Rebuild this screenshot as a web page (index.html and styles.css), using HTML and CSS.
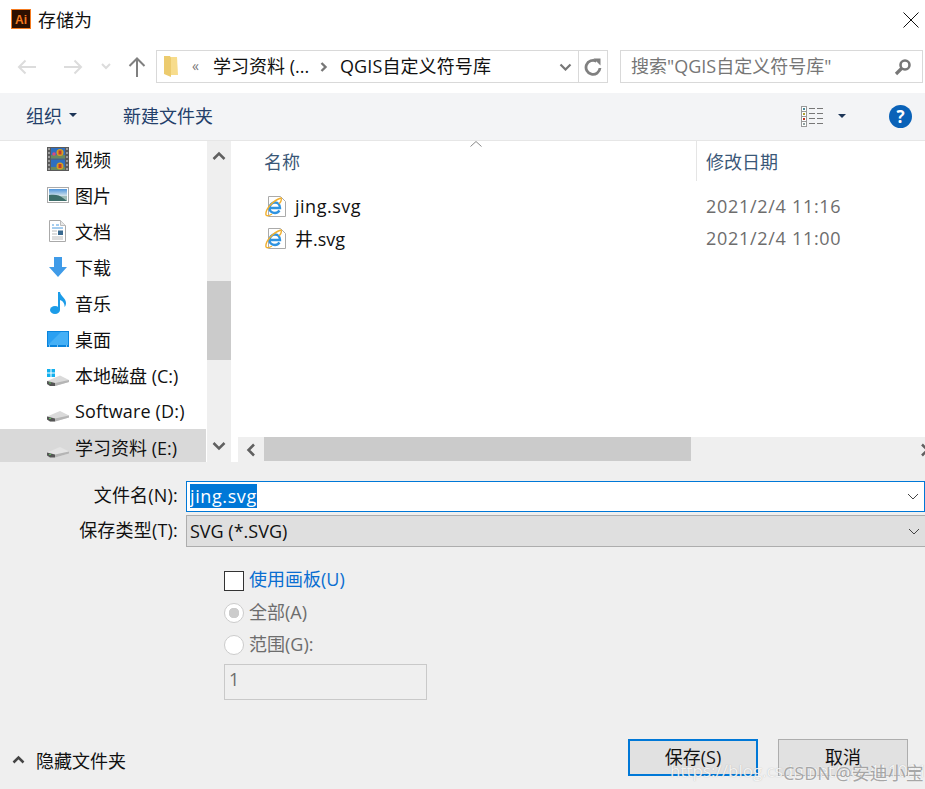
FILE: index.html
```html
<!DOCTYPE html>
<html lang="zh">
<head>
<meta charset="utf-8">
<title>存储为</title>
<link rel="stylesheet" href="styles.css">
</head>
<body>
<div class="dialog">
  <header class="titlebar">
    <svg class="app-icon" width="20" height="20" viewBox="0 0 20 20"><rect x="0.500" y="0.500" width="19" height="19" fill="#2d0f00" stroke="#f47b20"/><text x="10" y="14.500" text-anchor="middle" class="ai-text">Ai</text></svg>
    <span class="title">存储为</span>
    <svg class="close" width="16" height="16" viewBox="0 0 16 16"><path d="M0.500 0.500L15.500 15.500M15.500 0.500L0.500 15.500" stroke="#111" stroke-width="1" fill="none"/></svg>
  </header>

  <nav class="navbar">
    <div class="nav-buttons">
      <svg width="20" height="16" viewBox="0 0 20 16"><path d="M19 8H2M8.500 1.500L2 8l6.500 6.500" fill="none" stroke="#dcdcdc" stroke-width="2"/></svg>
      <svg class="nav-forward" width="20" height="16" viewBox="0 0 20 16"><path d="M1 8h17M11.500 1.500L18 8l-6.500 6.500" fill="none" stroke="#dcdcdc" stroke-width="2"/></svg>
      <svg class="nav-down" width="10" height="7" viewBox="0 0 10 7"><path d="M1 1l4 4 4-4" fill="none" stroke="#dcdcdc" stroke-width="2"/></svg>
      <svg class="nav-up" width="18" height="20" viewBox="0 0 18 20"><path d="M9 20V2M1.500 9L9 1.500 16.500 9" fill="none" stroke="#808080" stroke-width="2"/></svg>
    </div>
    <div class="address">
      <svg class="addr-folder" width="14" height="21" viewBox="0 0 14 21"><path d="M4 1h9l1 18H4z" fill="#f7dc8c"/><path d="M0 0h6l1 2v19l-7-3z" fill="#eccb6e"/></svg>
      <span class="addr-chev">«</span>
      <span class="addr-part">学习资料 (...</span>
      <svg class="addr-sep" width="8" height="10" viewBox="0 0 8 10"><path d="M1.500 1l4 4-4 4" fill="none" stroke="#777" stroke-width="2.400"/></svg>
      <span class="addr-current">QGIS自定义符号库</span>
      <svg class="addr-drop" width="13" height="8" viewBox="0 0 13 8"><path d="M1.500 1.500l5 5 5-5" fill="none" stroke="#777" stroke-width="2.200"/></svg>
      <span class="addr-refresh">
        <svg width="18" height="18" viewBox="0 0 18 18"><path d="M12.500 3.300A7 7 0 1 0 16 10" fill="none" stroke="#808080" stroke-width="2.800"/><path d="M9.500 0.500h7v7z" fill="#808080"/></svg>
      </span>
    </div>
    <div class="search">
      <span class="search-text">搜索"QGIS自定义符号库"</span>
      <svg width="18" height="18" viewBox="0 0 18 18"><circle cx="11" cy="7" r="4.500" fill="none" stroke="#777" stroke-width="2.600"/><path d="M7.500 10.500L2 16" stroke="#777" stroke-width="3.200"/></svg>
    </div>
  </nav>

  <div class="toolbar">
    <span class="tool">组织<i class="caret"></i></span>
    <span class="tool tool-new">新建文件夹</span>
    <span class="tool-right">
      <svg class="view-icon" width="22" height="21" viewBox="0 0 22 21">
        <rect x="0.500" y="0.500" width="5" height="20" fill="#fff" stroke="#999"/>
        <path d="M0.500 5.500h5M0.500 10.500h5M0.500 15.500h5" stroke="#999"/>
        <rect x="2" y="2" width="2" height="2" fill="#4a8a9a"/><rect x="2" y="7" width="2" height="2" fill="#b0a030"/><rect x="2" y="12" width="2" height="2" fill="#c03020"/><rect x="2" y="17" width="2" height="2" fill="#90a0a0"/>
        <path d="M8 2.500h6M16 2.500h6M8 7.500h6M16 7.500h6M8 12.500h6M16 12.500h6M8 17.500h6M16 17.500h6" stroke="#777"/>
      </svg>
      <i class="caret caret-view"></i>
      <span class="help">?</span>
    </span>
  </div>

  <div class="browser">
    <aside class="tree">
      <div class="tree-row">
        <svg width="22" height="24" viewBox="0 0 22 24"><rect width="22" height="24" fill="#5a5a5a"/><rect x="4" y="1" width="14" height="10.500" fill="#2f6fc0"/><rect x="4" y="12.500" width="14" height="10.500" fill="#2f6fc0"/><rect x="4" y="8" width="14" height="3.500" fill="#6a8a60"/><rect x="4" y="20" width="14" height="3" fill="#6a8a60"/><circle cx="13" cy="5.500" r="3.500" fill="#d9a020"/><path d="M11.500 3.500h3v4h-3z" fill="#c03a30"/><circle cx="7" cy="7" r="1.800" fill="#d84a80"/><circle cx="13" cy="19" r="3.500" fill="#d9a020"/><path d="M11.500 17h3v4h-3z" fill="#c03a30"/><path d="M1 2h2M1 6h2M1 10h2M1 14h2M1 18h2M1 22h2M19 2h2M19 6h2M19 10h2M19 14h2M19 18h2M19 22h2" stroke="#ddd"/></svg>
        <span>视频</span></div>
      <div class="tree-row">
        <svg width="22" height="16" viewBox="0 0 22 16"><defs><linearGradient id="sky" x1="0" y1="0" x2="0" y2="1"><stop offset="0" stop-color="#4f95dc"/><stop offset="1" stop-color="#d5e4ea"/></linearGradient></defs><rect x="0.500" y="0.500" width="21" height="15" fill="#fff" stroke="#aaa"/><rect x="2" y="2" width="18" height="7" fill="url(#sky)"/><rect x="2" y="9" width="18" height="5" fill="#9fbcb8"/><path d="M2 14V8c6-1 11 0 14 3l4 3z" fill="#3d6e6a"/></svg>
        <span>图片</span></div>
      <div class="tree-row">
        <svg class="icon-doc" width="17" height="22" viewBox="0 0 17 22"><path d="M0.500 0.500h11l5 5v16H0.500z" fill="#fff" stroke="#aaa"/><path d="M11.500 0.500v5h5" fill="#e8e8e8" stroke="#bbb"/><path d="M3 5h2M7 5h3M3 8h11" stroke="#4a9ade"/><path d="M3 11h5M3 14h5M3 17h11M3 19h11" stroke="#bbb"/><rect x="9" y="10.500" width="5" height="4.500" fill="#3a6a90"/></svg>
        <span>文档</span></div>
      <div class="tree-row">
        <svg class="icon-down" width="18" height="20" viewBox="0 0 18 20"><path d="M5 0h8v10h5L9 20 0 10h5z" fill="#3f9be8"/></svg>
        <span>下载</span></div>
      <div class="tree-row">
        <svg class="icon-music" width="16" height="22" viewBox="0 0 16 22"><ellipse cx="5" cy="18" rx="5" ry="4" fill="#1c9ce8"/><path d="M8 0h2c.5 4 6 6 6 11 0 1.500-.5 3-1.500 4 .5-3-1.500-6-4.500-7v10H8z" fill="#1c9ce8"/></svg>
        <span>音乐</span></div>
      <div class="tree-row">
        <svg width="22" height="16" viewBox="0 0 22 16"><rect width="22" height="16" fill="#0a84dc"/><rect x="1" y="1" width="20" height="13" fill="#2aa0f2"/><path d="M1 14L14 1h7v13z" fill="#45b0f6"/><path d="M2 15h1M10 15h1M19 15h1" stroke="#fff"/></svg>
        <span>桌面</span></div>
      <div class="tree-row">
        <svg class="icon-drive-win" width="22" height="18" viewBox="0 0 22 18"><path d="M0 0h3.500v3.500H0zM4.500 0H8v3.500H4.500zM0 4.500h3.500V8H0zM4.500 4.500H8V8H4.500z" fill="#12b0ee"/><path d="M0 12L13 6.500l9 4.500v2L8 17H3l-3-2z" fill="#dadada"/><path d="M0 12v3l3 2h5v-3z" fill="#555"/><path d="M2 14h2" stroke="#5fbf60"/><path d="M8 14l14-3v2L8 17z" fill="#b5b5b5"/></svg>
        <span>本地磁盘 (C:)</span></div>
      <div class="tree-row">
        <svg class="icon-drive" width="22" height="12" viewBox="0 0 22 12"><path d="M0 6.500L13 1l9 4.500v2L8 11.500H3L0 9.500z" fill="#dadada"/><path d="M0 6.500v3l3 2h5v-3z" fill="#555"/><path d="M2 8.500h2" stroke="#5fbf60"/><path d="M8 8.500l14-3v2L8 11.500z" fill="#b5b5b5"/></svg>
        <span class="latin-name">Software (D:)</span></div>
      <div class="tree-row tree-row-selected">
        <svg class="icon-drive" width="22" height="12" viewBox="0 0 22 12"><path d="M0 6.500L13 1l9 4.500v2L8 11.500H3L0 9.500z" fill="#e4e4e4"/><path d="M0 6.500v3l3 2h5v-3z" fill="#555"/><path d="M2 8.500h2" stroke="#5fbf60"/><path d="M8 8.500l14-3v2L8 11.500z" fill="#b5b5b5"/></svg>
        <span>学习资料 (E:)</span></div>
    </aside>
    <div class="vscroll">
      <svg class="arrow" width="14" height="10" viewBox="0 0 14 10"><path d="M1.500 8L7 2.500 12.500 8" fill="none" stroke="#606060" stroke-width="2.500"/></svg>
      <div class="vtrack"><div class="vthumb"></div></div>
      <svg class="arrow" width="14" height="10" viewBox="0 0 14 10"><path d="M1.500 2L7 7.500 12.500 2" fill="none" stroke="#606060" stroke-width="2.500"/></svg>
    </div>
    <section class="files">
      <div class="file-head">
        <div class="col-name">名称
          <svg class="sort" width="12" height="6" viewBox="0 0 12 6"><path d="M0.500 5.500L6 0.500l5.500 5" fill="none" stroke="#888"/></svg>
        </div>
        <div class="col-date">修改日期</div>
      </div>
      <div class="file-list">
        <div class="file-row">
          <span class="file-name">
            <svg width="22" height="22" viewBox="0 0 22 22"><path d="M3.500 1.500h12l5 5v15h-17z" fill="#fff" stroke="#aaa"/><path d="M5 13h10c0-3-2-5.500-5-5.500S4.500 10 4.500 13 7 18 10 18c2 0 3.500-1 4.500-2.500" fill="none" stroke="#2f93e0" stroke-width="2.400"/><path d="M1 20C0 15 7 6 16 3c1 2-1 5-2 6M1 20c1 1 3 1 6-1" fill="none" stroke="#f0b030" stroke-width="1.400"/></svg>
            <span class="latin-file">jing.svg</span></span>
          <span class="file-date">2021/2/4 11:16</span>
        </div>
        <div class="file-row">
          <span class="file-name">
            <svg width="22" height="22" viewBox="0 0 22 22"><path d="M3.500 1.500h12l5 5v15h-17z" fill="#fff" stroke="#aaa"/><path d="M5 13h10c0-3-2-5.500-5-5.500S4.500 10 4.500 13 7 18 10 18c2 0 3.500-1 4.500-2.500" fill="none" stroke="#2f93e0" stroke-width="2.400"/><path d="M1 20C0 15 7 6 16 3c1 2-1 5-2 6M1 20c1 1 3 1 6-1" fill="none" stroke="#f0b030" stroke-width="1.400"/></svg>
            <span>井.svg</span></span>
          <span class="file-date">2021/2/4 11:00</span>
        </div>
      </div>
      <div class="hscroll">
        <svg class="harrow" width="10" height="14" viewBox="0 0 10 14"><path d="M8 1.500L2.500 7 8 12.500" fill="none" stroke="#606060" stroke-width="2.500"/></svg>
        <div class="hthumb"></div>
        <svg class="harrow-right" width="10" height="14" viewBox="0 0 10 14"><path d="M2 1.500L7.500 7 2 12.500" fill="none" stroke="#606060" stroke-width="2.500"/></svg>
      </div>
    </section>
  </div>

  <div class="panel">
    <div class="form">
      <label class="form-label form-label-name">文件名(N):</label>
      <div class="field field-name"><span class="selected">jing.svg</span>
        <svg width="12" height="7" viewBox="0 0 12 7"><path d="M1 1l5 5 5-5" fill="none" stroke="#444"/></svg></div>
      <label class="form-label">保存类型(T):</label>
      <div class="field field-type"><span>SVG (*.SVG)</span>
        <svg width="12" height="7" viewBox="0 0 12 7"><path d="M1 1l5 5 5-5" fill="none" stroke="#444"/></svg></div>
    </div>
    <div class="options">
      <div class="option option-check"><i class="checkbox"></i><span>使用画板(U)</span></div>
      <div class="option option-radio"><i class="radio radio-on"></i><span>全部(A)</span></div>
      <div class="option option-radio"><i class="radio"></i><span>范围(G):</span></div>
      <div class="range">1</div>
    </div>
    <footer class="footer">
      <span class="hide-folders">
        <svg width="13" height="9" viewBox="0 0 13 9"><path d="M1.500 7.500L6.500 2.500l5 5" fill="none" stroke="#444" stroke-width="2.500"/></svg>
        隐藏文件夹</span>
      <span class="buttons">
        <button class="btn btn-primary">保存(S)</button>
        <button class="btn">取消</button>
      </span>
    </footer>
  </div>
  <div class="wm-url">https://blog.csdn.net/qq_411091</div>
  <div class="wm-csdn">CSDN @安迪小宝</div>
</div>
</body>
</html>
```
FILE: styles.css
```css
* { box-sizing: border-box; }
html, body { margin: 0; padding: 0; }
body {
  width: 925px;
  height: 789px;
  overflow: hidden;
  font-family: "Open Sans", "Noto Sans CJK SC", sans-serif;
  font-size: 18px;
  color: #111;
}
.dialog {
  position: relative;
  width: 925px;
  height: 789px;
  overflow: hidden;
  background: #fff;
  display: flex;
  flex-direction: column;
}
svg { display: block; flex: none; }

.titlebar { height: 40px; display: flex; align-items: center; padding: 0 6px 0 11px; flex: none; }
.app-icon { margin-top: -3px; }
.ai-text { font: 700 12px "Liberation Sans", sans-serif; fill: #f47b20; }
.title { margin-left: 7px; padding-bottom: 2px; }
.close { margin-left: auto; margin-top: -1px; }

.navbar { height: 53px; flex: none; display: flex; align-items: flex-start; padding: 10px 2px 0 0; }
.nav-buttons { width: 156px; height: 33px; display: flex; align-items: center; padding-left: 17px; }
.nav-forward { margin-left: 26px; }
.nav-down { margin-left: 18px; }
.nav-up { margin-left: 17px; }
.address { width: 452px; height: 33px; border: 1px solid #d9d9d9; display: flex; align-items: center; padding-left: 7px; }
.addr-chev { margin-left: 14px; font-size: 14px; color: #777; width: 21px; padding-bottom: 3px; }
.addr-part { width: 107px; white-space: nowrap; padding-bottom: 3px; }
.addr-sep { margin-right: 12px; }
.addr-current { width: 219px; white-space: nowrap; padding-bottom: 3px; letter-spacing: 0.1px; }
.addr-refresh { margin-left: 6px; flex: 1; height: 31px; border-left: 1px solid #d9d9d9; display: flex; align-items: center; justify-content: center; }
.search { margin-left: 12px; width: 303px; height: 33px; border: 1px solid #d9d9d9; display: flex; align-items: center; justify-content: space-between; padding: 0 10px; color: #767676; }
.search-text { padding-bottom: 3px; }

.toolbar { height: 48px; flex: none; background: #f3f4f6; border-bottom: 1px solid #e6e6e6; display: flex; align-items: center; padding: 0 13px 0 26px; color: #24406a; }
.tool { display: flex; align-items: center; padding-bottom: 3px; }
.tool-new { margin-left: 46px; }
.caret { display: block; width: 0; height: 0; border: 4px solid transparent; border-top-color: #1d3557; border-bottom: 0; margin-left: 7px; }
.tool-right { margin-left: auto; display: flex; align-items: center; padding-bottom: 1px; }
.caret-view { margin: 0 0 0 15px; }
.help { margin-left: 43px; width: 23px; height: 23px; border-radius: 50%; background: #0a62b8; color: #fff; font-weight: 700; font-size: 17px; line-height: 23px; text-align: center; }

.browser { height: 321px; flex: none; display: flex; }
.tree { width: 207px; overflow: hidden; flex: none; }
.tree-row { height: 36px; display: grid; grid-template-columns: 28px 1fr; align-items: center; padding-left: 47px; white-space: nowrap; }
.tree-row-selected { background: #d9d9d9; width: 206px; }
.latin-name { letter-spacing: 0.15px; }
.icon-doc { margin-left: 2px; }
.icon-down { margin-left: 2px; }
.icon-music { margin-left: 3px; }
.icon-drive { margin-top: 10px; }
.icon-drive-win { margin-top: 6px; }
.vscroll { width: 24px; background: #efefef; flex: none; display: flex; flex-direction: column; align-items: center; }
.vscroll .arrow { margin: 10px 0 11px; }
.vtrack { flex: 1; }
.vthumb { width: 24px; height: 79px; margin-top: 109px; background: #cbcbcb; }
.files { flex: 1; margin-left: 7px; display: flex; flex-direction: column; min-width: 0; }
.file-head { height: 40px; display: flex; color: #3b5878; flex: none; }
.col-name { position: relative; width: 459px; padding: 7px 0 0 26px; border-right: 1px solid #e5e5e5; }
.col-date { padding: 7px 0 0 9px; }
.sort { position: absolute; left: 232px; top: 0; }
.file-list { flex: 1; padding-top: 9px; }
.file-row { height: 32px; display: flex; align-items: center; }
.file-name { width: 468px; padding-left: 27px; display: flex; align-items: center; gap: 8px; }
.latin-file { letter-spacing: 0.5px; }
.file-date { color: #6d6d6d; letter-spacing: 0.7px; }
.hscroll { height: 25px; flex: none; background: #efefef; display: flex; align-items: center; padding-left: 8px; }
.hthumb { width: 427px; height: 24px; margin: 0 0 1px 8px; background: #cbcbcb; }
.harrow-right { margin-left: auto; margin-right: -5px; }

.panel { flex: 1; background: #efefef; display: flex; flex-direction: column; }
.form { display: grid; grid-template-columns: 178px 739px; column-gap: 8px; row-gap: 3px; padding-top: 19px; }
.form-label { text-align: right; line-height: 31px; letter-spacing: 0.2px; }
.form-label-name { line-height: 29px; }
.field { height: 31px; display: flex; align-items: center; justify-content: space-between; padding: 0 5px 0 3px; }
.field-name { background: #fff; border: 1px solid #0078d7; }
.selected { background: #0078d7; color: #fff; line-height: 24px; letter-spacing: 0.6px; margin-bottom: 1px; }
.field-type { height: 32px; background: #dfdfdf; border: 1px solid #adadad; border-width: 1px 0 1px 1px; padding-left: 3px; }
.options { margin: 24px 0 0 224px; }
.option { display: flex; align-items: center; height: 32px; color: #6d6d6d; gap: 5px; }
.option span { padding-bottom: 5px; }
.option-check { color: #0a6ed1; height: 20px; margin-bottom: 6px; }
.option-check span { padding-bottom: 7px; }
.checkbox { width: 20px; height: 20px; background: #fff; border: 1px solid #333; display: block; }
.radio { width: 20px; height: 20px; border-radius: 50%; background: #fff; border: 1px solid #ccc; display: block; }
.radio-on { background: radial-gradient(circle, #cccccc 0 5px, #fff 5.500px); }
.range { width: 203px; height: 36px; margin-top: 3px; border: 1px solid #c9c9c9; background: #efefef; color: #6d6d6d; padding-left: 4px; line-height: 28px; }
.footer { margin-top: auto; display: flex; justify-content: space-between; align-items: center; padding: 0 17px 13px 12px; }
.hide-folders { display: flex; align-items: center; gap: 11px; margin-top: 4px; }
.buttons { display: flex; gap: 20px; }
.btn { width: 130px; height: 37px; background: #e1e1e1; border: 1px solid #adadad; font: inherit; color: #111; padding: 0 0 3px; }
.btn-primary { border: 2px solid #0078d7; }

.wm-url { position: absolute; left: 670px; top: 759px; white-space: nowrap; font-size: 17px; color: rgba(255,255,255,0.85); text-shadow: 0 0 1px rgba(120,120,120,0.5); }
.wm-csdn { position: absolute; left: 783px; top: 759px; font-size: 18px; white-space: nowrap; color: rgba(140,140,140,0.75); text-shadow: 0 0 2px #fff; }
```
